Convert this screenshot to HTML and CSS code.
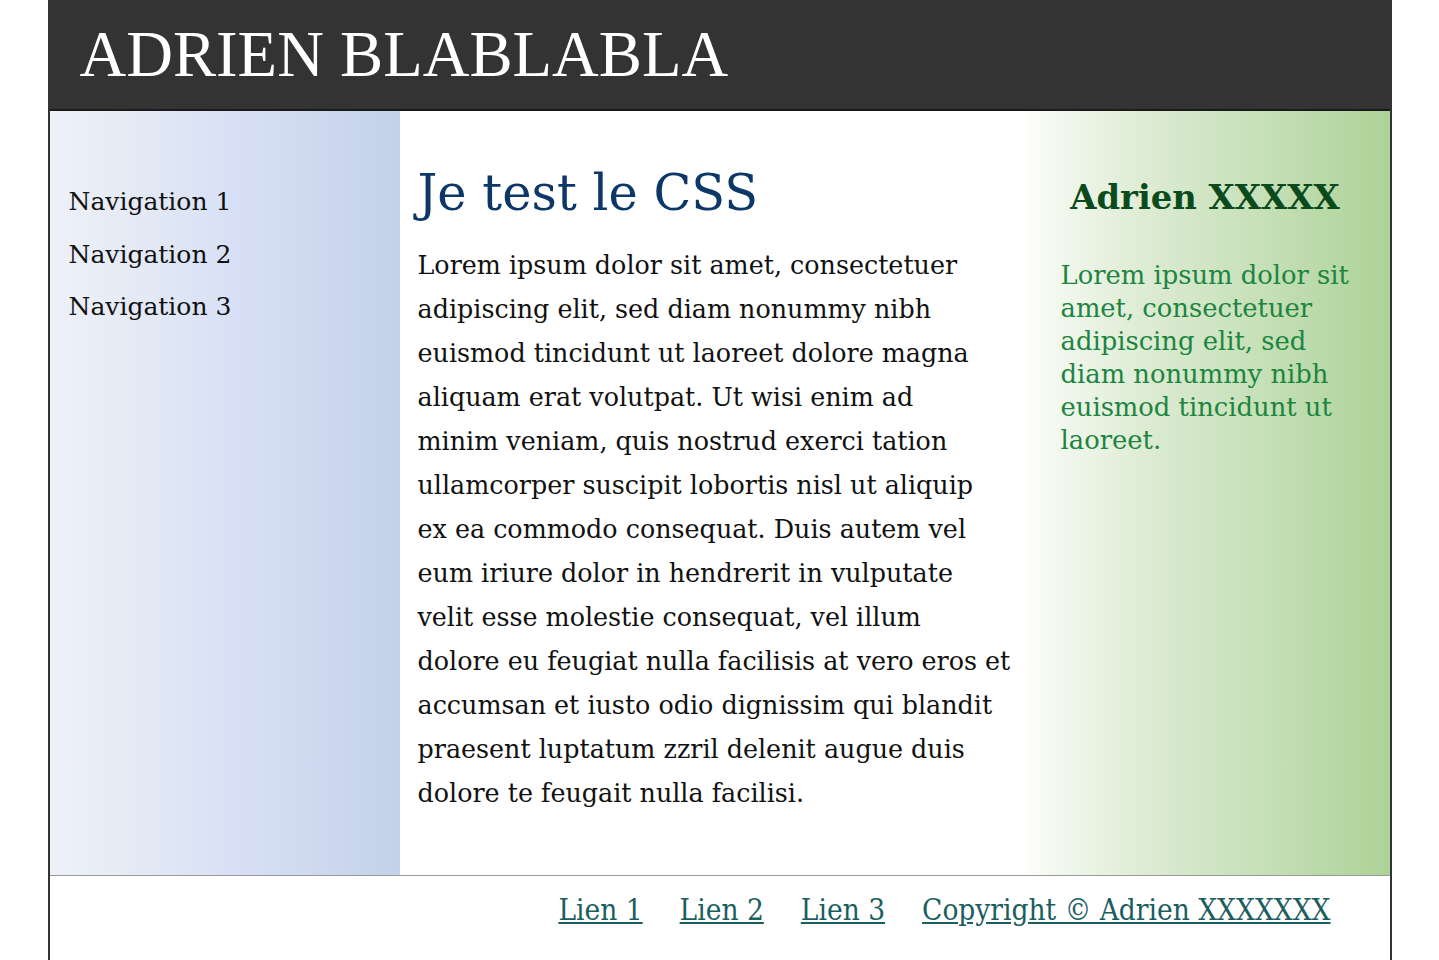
FILE: index.html
```html
<!DOCTYPE html>
<html lang="fr">
<head>
<meta charset="utf-8">
<title>Adrien Blablabla</title>
<link rel="stylesheet" href="styles.css">
</head>
<body>
<div class="page">
  <header class="header">
    <h1 class="site-title">ADRIEN BLABLABLA</h1>
  </header>
  <div class="layout">
    <nav class="nav">
      <ul class="nav-list">
        <li>Navigation 1</li>
        <li>Navigation 2</li>
        <li>Navigation 3</li>
      </ul>
    </nav>
    <main class="main">
      <h2 class="main-title">Je test le CSS</h2>
      <p class="main-text">Lorem ipsum dolor sit amet, consectetuer adipiscing elit, sed diam nonummy nibh euismod tincidunt ut laoreet dolore magna aliquam erat volutpat. Ut wisi enim ad minim&nbsp;veniam, quis nostrud exerci tation ullamcorper suscipit lobortis nisl ut aliquip ex&nbsp;ea commodo consequat. Duis autem vel eum iriure dolor in hendrerit in vulputate velit esse molestie consequat, vel illum dolore&nbsp;eu feugiat nulla facilisis at vero eros et accumsan et iusto odio dignissim qui blandit praesent luptatum zzril delenit augue duis dolore te feugait nulla facilisi.</p>
    </main>
    <aside class="aside">
      <h3 class="aside-title">Adrien XXXXX</h3>
      <p class="aside-text">Lorem ipsum dolor sit amet, consectetuer adipiscing elit, sed diam nonummy nibh euismod tincidunt ut laoreet.</p>
    </aside>
  </div>
  <footer class="footer">
    <a href="#" class="footer-link">Lien 1</a>
    <a href="#" class="footer-link">Lien 2</a>
    <a href="#" class="footer-link">Lien 3</a>
    <a href="#" class="footer-link">Copyright © Adrien XXXXXXX</a>
  </footer>
</div>
</body>
</html>
```

FILE: styles.css
```css
html, body {
  margin: 0;
  padding: 0;
  background: #ffffff;
}

body {
  font-family: "DejaVu Serif", "Liberation Serif", serif;
  color: #111;
}

.page {
  width: 1344px;
  margin: 0 auto;
  box-sizing: border-box;
  border-left: 2px solid #333;
  border-right: 2px solid #333;
  min-height: 960px;
}

.header {
  background: #333333;
  height: 109px;
  border-bottom: 2px solid #1a1a1a;
  display: flex;
  align-items: center;
  padding-left: 30px;
}

.site-title {
  margin: 0;
  color: #fff;
  font-family: "Liberation Serif", "Times New Roman", serif;
  font-weight: normal;
  font-size: 64.7px;
  line-height: 1;
}

.layout {
  display: grid;
  grid-template-columns: 350px 1fr 370px;
  height: 764px;
  border-bottom: 1px solid #9a9a9a;
}

.nav {
  background: linear-gradient(to right, #eef1f8 0%, #e2e8f4 30%, #d6dff6 55%, #cfd9f0 75%, #c3d1ea 100%);
  padding: 74px 0 0 19px;
}

.nav-list {
  list-style: none;
  margin: 0;
  padding: 0;
  display: flex;
  flex-direction: column;
  gap: 19.5px;
}

.nav-list li {
  font-size: 25px;
  line-height: 33px;
  color: #111;
}

.main {
  padding: 50px 6px 0 18px;
}

.main-title {
  margin: 0 0 18px;
  font-size: 49.5px;
  line-height: 64px;
  font-weight: normal;
  color: #0d3766;
}

.main-text {
  margin: 0;
  font-size: 25.4px;
  line-height: 44px;
  color: #111;
}

.aside {
  background: linear-gradient(to right, #ffffff 0%, #f4f9f1 8%, #dcebd2 35%, #c6e0b8 65%, #add297 100%);
  padding: 66px 40px 0 41px;
}

.aside-title {
  margin: 0 0 42px;
  text-align: center;
  font-size: 33.8px;
  line-height: 40px;
  color: #0a4a1c;
}

.aside-text {
  margin: 0;
  font-size: 25.8px;
  line-height: 33px;
  color: #1c8540;
}

.footer {
  display: flex;
  justify-content: flex-end;
  gap: 37px;
  padding: 14px 59px 0 0;
}

.footer-link {
  color: #1b5e5e;
  font-family: "DejaVu Serif Condensed", "DejaVu Serif", serif;
  font-stretch: condensed;
  font-size: 29.5px;
  line-height: 40px;
  text-decoration: underline;
}
```
